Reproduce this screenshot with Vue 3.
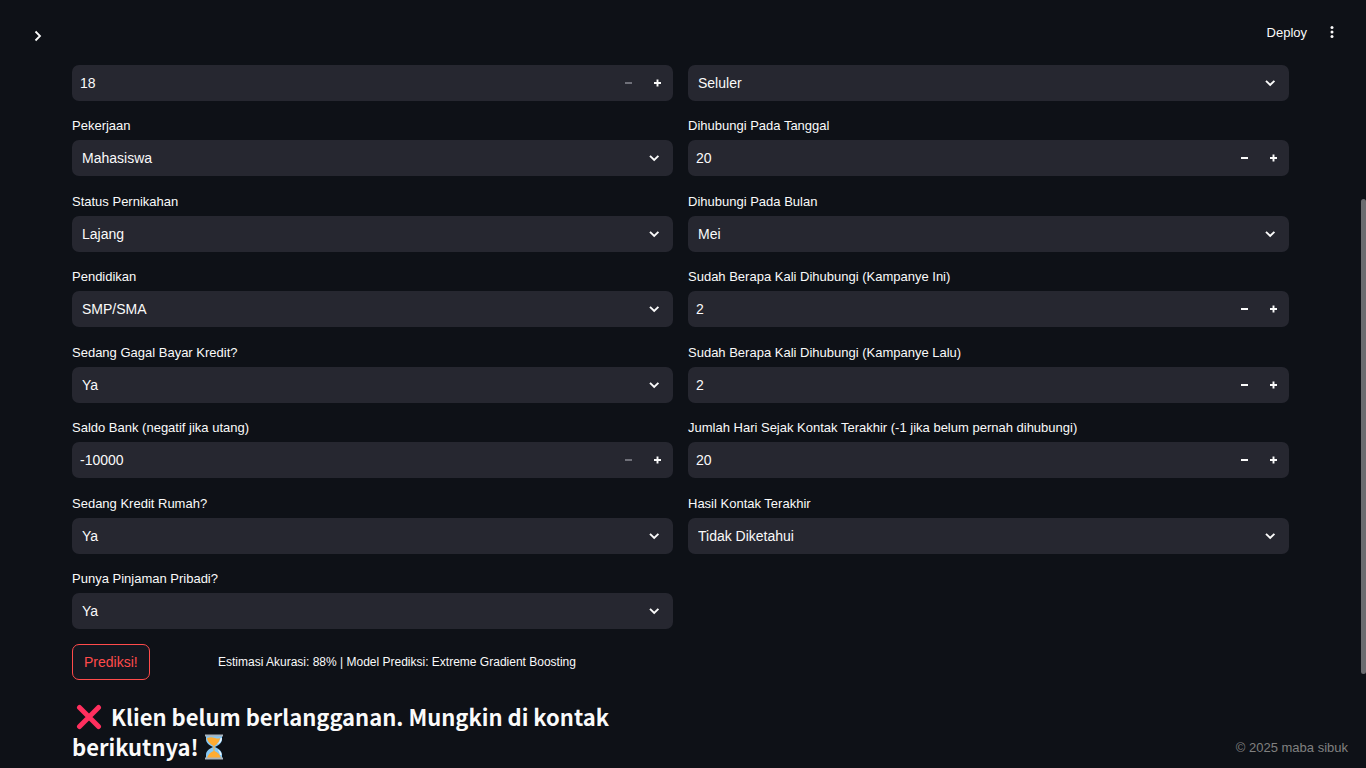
<script setup>
import { reactive } from 'vue'

const fields = reactive([
  { id: 'usia', aria: 'Usia', type: 'number', value: '18', atMin: true },
  { id: 'kontak', aria: 'Jenis Kontak', type: 'select', value: 'Seluler' },
  { id: 'pekerjaan', label: 'Pekerjaan', type: 'select', value: 'Mahasiswa' },
  { id: 'tanggal', label: 'Dihubungi Pada Tanggal', type: 'number', value: '20' },
  { id: 'nikah', label: 'Status Pernikahan', type: 'select', value: 'Lajang' },
  { id: 'bulan', label: 'Dihubungi Pada Bulan', type: 'select', value: 'Mei' },
  { id: 'pendidikan', label: 'Pendidikan', type: 'select', value: 'SMP/SMA' },
  { id: 'kini', label: 'Sudah Berapa Kali Dihubungi (Kampanye Ini)', type: 'number', value: '2' },
  { id: 'gagal', label: 'Sedang Gagal Bayar Kredit?', type: 'select', value: 'Ya' },
  { id: 'lalu', label: 'Sudah Berapa Kali Dihubungi (Kampanye Lalu)', type: 'number', value: '2' },
  { id: 'saldo', label: 'Saldo Bank (negatif jika utang)', type: 'number', value: '-10000', atMin: true },
  { id: 'hari', label: 'Jumlah Hari Sejak Kontak Terakhir (-1 jika belum pernah dihubungi)', type: 'number', value: '20' },
  { id: 'rumah', label: 'Sedang Kredit Rumah?', type: 'select', value: 'Ya' },
  { id: 'hasil', label: 'Hasil Kontak Terakhir', type: 'select', value: 'Tidak Diketahui' },
  { id: 'pinjaman', label: 'Punya Pinjaman Pribadi?', type: 'select', value: 'Ya' },
])

function step(field, delta) {
  field.value = String(Number(field.value) + delta)
}
</script>

<template>
  <div class="app">
    <header class="header">
      <button class="icon-btn expand" type="button" aria-label="Buka bilah sisi">
        <svg width="18" height="18" viewBox="0 0 18 18"><path d="M6.5 4.5 11 9l-4.5 4.5" fill="none" stroke="currentColor" stroke-width="1.8" /></svg>
      </button>
      <div class="toolbar">
        <button class="deploy" type="button">Deploy</button>
        <button class="icon-btn" type="button" aria-label="Menu utama">
          <svg width="18" height="18" viewBox="0 0 18 18" fill="currentColor"><circle cx="9" cy="4.5" r="1.5" /><circle cx="9" cy="9" r="1.5" /><circle cx="9" cy="13.5" r="1.5" /></svg>
        </button>
      </div>
    </header>

    <main class="content">
      <form class="form" @submit.prevent>
        <div v-for="f in fields" :key="f.id" class="field">
          <label v-if="f.label" :for="f.id">{{ f.label }}</label>
          <div v-if="f.type === 'select'" class="box">
            <select :id="f.id" v-model="f.value" :aria-label="f.aria">
              <option>{{ f.value }}</option>
            </select>
            <svg class="chevron" width="18" height="18" viewBox="0 0 18 18"><path d="M5 6.8 9.2 11l4.2-4.2" fill="none" stroke="currentColor" stroke-width="1.9" /></svg>
          </div>
          <div v-else class="box number">
            <input :id="f.id" v-model="f.value" type="text" inputmode="numeric" :aria-label="f.aria" />
            <button type="button" aria-label="Kurangi" :disabled="f.atMin" @click="step(f, -1)">
              <svg width="7" height="8" viewBox="0 0 7 8"><path d="M0 4h7" stroke="currentColor" stroke-width="2" /></svg>
            </button>
            <button type="button" aria-label="Tambah" @click="step(f, 1)">
              <svg width="7" height="8" viewBox="0 0 7 8"><path d="M0 4h7M3.5 .5v7" stroke="currentColor" stroke-width="1.9" /></svg>
            </button>
          </div>
        </div>
      </form>

      <div class="actions">
        <button class="predict" type="button">Prediksi!</button>
        <p>Estimasi Akurasi: 88% | Model Prediksi: Extreme Gradient Boosting</p>
      </div>

      <div class="result">
        <h3>
          <svg class="cross" viewBox="0 0 26 26" role="img" aria-label="Silang"><path d="M3.5 3.5 22.5 22.5M22.5 3.5 3.5 22.5" stroke="#ff2f5e" stroke-width="5" stroke-linecap="round" /></svg>
          Klien belum berlangganan. Mungkin di kontak berikutnya!
          <svg class="hourglass" viewBox="0 0 20 26" role="img" aria-label="Jam pasir">
            <path d="M2 2h16v3c0 4-3 6-7 8 4 2 7 4 7 8v3H2v-3c0-4 3-6 7-8-4-2-7-4-7-8z" fill="#85c8f5" />
            <path d="M3 4q4-1.5 8 0 3 1 5 0-.5 4.500-5.500 8v5q5 2 6.500 7H3q1.500-5 6.500-7v-5Q3.500 8.500 3 4z" fill="#ffac33" />
            <path d="M13 10q3-2 3.500-6H18q0 5-5 6zM13.500 15.500q4 1.500 4 5.500h-1.500q0-3-2.500-5.500z" fill="#e8f6ff" />
            <path d="M1 1.5h18M1 24.5h18" stroke="#a9b4bd" stroke-width="2" />
          </svg>
        </h3>
      </div>
    </main>

    <footer class="credit">© 2025 maba sibuk</footer>
    <div class="scroll-thumb"></div>
  </div>
</template>

<style>
body {
  background: #0e1117;
}
</style>

<style scoped>
.app {
  position: relative;
  box-sizing: border-box;
  height: 100vh;
  overflow: hidden;
  padding-right: 5px;
  background: #0e1117;
  color: #fafafa;
  font-family: "Liberation Sans", Arial, sans-serif;
  font-size: 13px;
}
button,
input,
select {
  margin: 0;
  padding: 0;
  border: 0;
  background: none;
  color: inherit;
  font: inherit;
}
svg {
  display: block;
}
.header {
  position: absolute;
  inset: 0 0 auto;
  display: flex;
  justify-content: space-between;
  padding: 20px 22px 0 26px;
}
.icon-btn {
  display: grid;
  place-items: center;
  width: 24px;
  height: 24px;
}
.expand {
  margin-top: 4px;
}
.toolbar {
  display: flex;
  align-items: center;
  gap: 13px;
  height: 24px;
}
.content {
  padding: 25px 72px 0;
}
.form,
.result {
  display: grid;
  grid-template-columns: 1fr 1fr;
  column-gap: 15px;
}
.form {
  grid-auto-rows: 1fr;
  min-height: 604px;
}
.field {
  display: flex;
  flex-direction: column;
  justify-content: flex-end;
}
label {
  line-height: 20px;
  margin-bottom: 4px;
}
.box {
  position: relative;
  display: flex;
  align-items: center;
  height: 36px;
  border-radius: 7px;
  background: #262730;
  font-size: 14px;
}
select {
  appearance: none;
  flex: 1;
  height: 36px;
  padding: 0 10px;
}
.chevron {
  position: absolute;
  right: 10px;
  pointer-events: none;
}
.number {
  box-sizing: border-box;
  padding-right: 1px;
}
.number input {
  flex: 1;
  min-width: 0;
  height: 36px;
  padding: 0 8px;
}
.number button {
  display: grid;
  place-items: center;
  width: 29px;
  height: 36px;
}
.number button:disabled {
  color: #6f7079;
}
.actions {
  display: grid;
  grid-template-columns: 131px 1fr;
  column-gap: 15px;
  align-items: center;
  margin-top: 15px;
  font-size: 12px;
}
.actions p {
  margin: 0;
}
.predict {
  justify-self: start;
  height: 36px;
  padding: 0 11px;
  border: 1px solid #ff4b4b;
  border-radius: 7px;
  background: #131720;
  color: #ff4b4b;
  font-size: 14px;
}
.result {
  margin-top: 21px;
}
h3 {
  margin: 0;
  font-family: "Noto Sans CJK SC", "Noto Sans", sans-serif;
  font-size: 22px;
  font-weight: 700;
  line-height: 30px;
}
h3 svg {
  display: inline-block;
  height: 26px;
  vertical-align: -4px;
}
.cross {
  width: 26px;
  margin: 0 4px;
}
.hourglass {
  width: 20px;
}
.credit {
  position: absolute;
  right: 18px;
  bottom: 10px;
  line-height: 20px;
  color: #808080;
}
.scroll-thumb {
  position: absolute;
  right: 0;
  top: 199px;
  bottom: 94px;
  width: 5px;
  border-radius: 3px;
  background: #6b6c70;
}
</style>
